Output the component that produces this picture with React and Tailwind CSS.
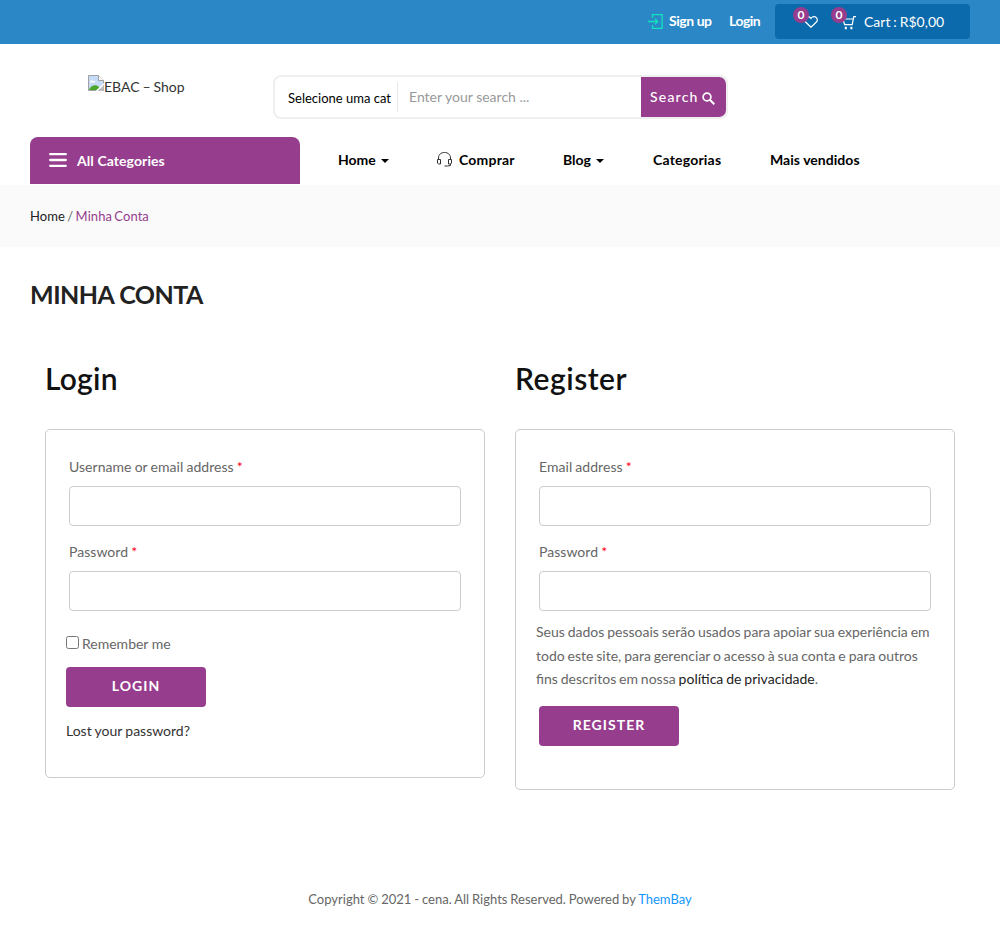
function Caret() {
  return <span className="ml-[5px] mt-[2px] border-x-4 border-t-4 border-x-transparent border-t-black" />;
}

function Field({ label, type }) {
  return (
    <label className="mx-[3px] block">
      <span className="block h-6 text-sm leading-6 tracking-[0.04px] [word-spacing:-0.5px]">
        {label} <span className="text-[#ff0022]">*</span>
      </span>
      <input type={type} className="mt-[7px] block h-10 w-full rounded-[4px] border border-[#ccc] bg-white px-3 outline-none" />
    </label>
  );
}

function Badge({ className }) {
  return (
    <span className={"absolute flex size-4 items-center justify-center rounded-full bg-[#963d8d] text-[12px] font-bold leading-4 text-white " + className}>
      0
    </span>
  );
}

function TopBar() {
  return (
    <header className="flex h-11 items-start bg-[#2b87c5] text-white">
      <a className="ml-[648px] mt-[14px] flex h-4 w-[64px]">
        <svg className="size-[15px] shrink-0" viewBox="0 0 15 15" fill="none" stroke="#12e2bd" strokeWidth="1.3">
          <path d="M4.5 4V.7h9.6v13.6H4.5V11M0 7.5h9.5M7 4.8l2.7 2.7L7 10.2" />
        </svg>
        <span className="ml-[6px] shrink-0 text-sm font-bold leading-[13px] tracking-[-0.45px]">Sign up</span>
      </a>
      <a className="ml-[17px] mt-[14px] w-[46px] text-sm font-bold leading-[13px] tracking-[-0.5px]">Login</a>
      <div className="mt-1 flex h-[35px] w-[195px] rounded-[4px] bg-[#0a6aab]">
        <span className="relative ml-[29px] mt-[12px] block h-3 w-[14px]">
          <svg className="block h-3 w-[14px]" viewBox="0 0 14 12" fill="none" stroke="#fff" strokeWidth="1.2">
            <path d="M7 11.2 1.6 6C-.7 3.4 2.2-.7 5.5 1.1 6.4 1.6 7 2.5 7 2.5s.6-.9 1.5-1.4c3.3-1.8 6.2 2.3 3.9 4.9Z" />
          </svg>
          <Badge className="-left-[11px] -top-[9px]" />
        </span>
        <span className="relative ml-[24px] mt-[12px] block h-[14px] w-[14px]">
          <svg className="block size-[14px]" viewBox="0 0 14 14" fill="none" stroke="#fff" strokeWidth="1.2">
            <path d="M14 .7h-2.2L10.2 8.6H2.6L1 3h10.2" />
            <path d="M2.8 10.700h2v2.500h-2zM8.4 10.700h2v2.500h-2z" fill="#fff" stroke="none" />
          </svg>
          <Badge className="-left-[11px] -top-[9px]" />
        </span>
        <span className="ml-[8px] mt-[9px] whitespace-nowrap text-sm leading-[18px] [word-spacing:-0.7px]">Cart : R$0,00</span>
      </div>
    </header>
  );
}

function BrokenImage() {
  return (
    <svg className="size-4 shrink-0" viewBox="0 0 16 16">
      <path d="M.5.5h10l5 5v10H.5Z" fill="#c5dbf7" stroke="#a0a0a0" />
      <path d="M2 7.5C2 5 4.5 5 5 6c1.500-.5 2.500.5 2 1.500Z" fill="#fff" />
      <path d="M1 15c1-4 6-6 9-4l3 4Z" fill="#4aa72e" />
      <path d="M10.500.5v5h5" fill="#fff" stroke="#a0a0a0" />
      <path d="M16 8v2L10 16H7.500Z" fill="#fff" />
      <path d="M16 10v6h-6Z" fill="#b9b9b9" />
    </svg>
  );
}

function Masthead() {
  return (
    <div className="flex h-[93px] items-start">
      <div className="ml-[88px] mt-[31px] flex w-[185px] text-sm leading-6 text-[#333]">
        <BrokenImage />
        <span className="whitespace-nowrap [word-spacing:-0.7px]">EBAC – Shop</span>
      </div>
      <div className="mt-[31px] flex h-[44px] w-[455px] rounded-[8px] border-2 border-[#efefef]">
        <span className="my-[5px] w-[123px] overflow-hidden whitespace-nowrap border-r border-[#e8e8e8] pl-[13px] text-[13px] leading-8 text-black">
          Selecione uma cat
        </span>
        <span className="grow pl-[11px] text-sm leading-10 text-[#999]">Enter your search ...</span>
        <button className="flex w-[85px] items-center rounded-r-[7px] bg-[#963d8d] pb-px pl-[9px] text-sm font-medium tracking-[1.2px] text-white">
          Search
          <svg className="ml-[3px] mt-[3px] size-[13px]" viewBox="0 0 13 13" fill="none" stroke="#fff" strokeWidth="1.700">
            <circle cx="5" cy="5" r="3.900" />
            <path d="m7.800 7.800 4.500 4.500" strokeWidth="2" />
          </svg>
        </button>
      </div>
    </div>
  );
}

function Nav() {
  return (
    <nav className="flex h-12 items-start text-sm font-bold leading-6 text-black">
      <div className="ml-[30px] flex h-[47px] w-[270px] rounded-t-[8px] bg-[#963d8d] text-white">
        <svg className="ml-[19px] mt-[16px] h-[14px] w-[18px]" viewBox="0 0 18 14" stroke="#fff" strokeWidth="2.300" strokeLinecap="round">
          <path d="M1.200 1.200h15.600M1.200 7h15.600M1.200 12.800h15.600" />
        </svg>
        <span className="ml-[10px] mt-[12px] tracking-[0.08px]">All Categories</span>
      </div>
      <a className="ml-[38px] mt-[11px] flex w-[99px] items-center">Home<Caret /></a>
      <a className="mt-[11px] flex w-[126px]">
        <svg className="mt-[4px] h-[15px] w-[15px]" viewBox="0 0 15 15" fill="none" stroke="#333" strokeWidth="1">
          <path d="M1.500 7V6C1.500 2.500 4 .5 7.500.5s6 2 6 5.500v1M.5 7.500h3v4.500h-2l-1-1ZM14.500 7.500h-3v4.500h2l1-1ZM13.500 12v1.500l-3 .5H7.500" />
        </svg>
        <span className="ml-[7px] tracking-[0.2px]">Comprar</span>
      </a>
      <a className="mt-[11px] flex w-[90px] items-center">Blog<Caret /></a>
      <a className="mt-[11px] w-[117px] tracking-[0.2px]">Categorias</a>
      <a className="mt-[11px] tracking-[0.04px]">Mais vendidos</a>
    </nav>
  );
}

const primary = "block h-10 w-[140px] rounded-[4px] bg-[#963d8d] pb-[2px] text-sm font-bold tracking-[1.050px] text-white";

export default function App() {
  return (
    <div className="h-[945px] w-[1000px] overflow-hidden bg-white font-['Lato',sans-serif] text-[#666]">
      <TopBar />
      <Masthead />
      <Nav />
      <div className="h-[62px] bg-[#fafafa] pl-[30px] pt-[20px] text-[13px] leading-[23px] tracking-[0.060px] text-[#222] [word-spacing:-1px]">
        Home <span className="text-[#666]">/</span> <span className="text-[#963d8d]">Minha Conta</span>
      </div>
      <h1 className="ml-[30px] mt-[32px] h-8 text-[25px] font-bold leading-[30px] tracking-[-0.5px] text-[#222]">MINHA CONTA</h1>
      <main className="mx-[45px] mt-[48px] flex items-start gap-[30px]">
        <section className="w-[440px]">
          <h2 className="h-10 text-[30px] font-semibold leading-[38px] tracking-[0.25px] text-[#111]">Login</h2>
          <form className="mt-[30px] h-[349px] rounded-[5px] border border-[#ccc] px-5 pt-[25px]">
            <Field label="Username or email address" type="text" />
            <div className="h-[14px]" />
            <Field label="Password" type="password" />
            <label className="mt-[21px] flex h-6 text-sm leading-6">
              <input type="checkbox" className="mr-[3px] mt-[4px] size-[13px]" />
              Remember me
            </label>
            <button type="button" className={primary + " mt-[11px]"}>LOGIN</button>
            <a className="mt-[12px] block text-sm leading-6 text-[#333] [word-spacing:-0.4px]">Lost your password?</a>
          </form>
        </section>
        <section className="w-[440px]">
          <h2 className="h-10 text-[30px] font-semibold leading-[38px] tracking-[0.500px] text-[#111]">Register</h2>
          <form className="mt-[30px] h-[361px] rounded-[5px] border border-[#ccc] px-5 pt-[25px]">
            <Field label="Email address" type="email" />
            <div className="h-[14px]" />
            <Field label="Password" type="password" />
            <p className="mt-[9px] whitespace-nowrap text-sm leading-[23.500px] [word-spacing:-0.700px]">
              Seus dados pessoais serão usados para apoiar sua experiência em<br />
              todo este site, para gerenciar o acesso à sua conta e para outros<br />
              fins descritos em nossa <a className="text-[#222]">política de privacidade</a>.
            </p>
            <button type="button" className={primary + " ml-[3px] mt-[15px]"}>REGISTER</button>
          </form>
        </section>
      </main>
      <footer className="mt-[97px] text-center text-[13px] leading-6 [word-spacing:-0.4px]">
        Copyright © 2021 - cena. All Rights Reserved. Powered by <a className="text-[#1496ff]">ThemBay</a>
      </footer>
    </div>
  );
}
